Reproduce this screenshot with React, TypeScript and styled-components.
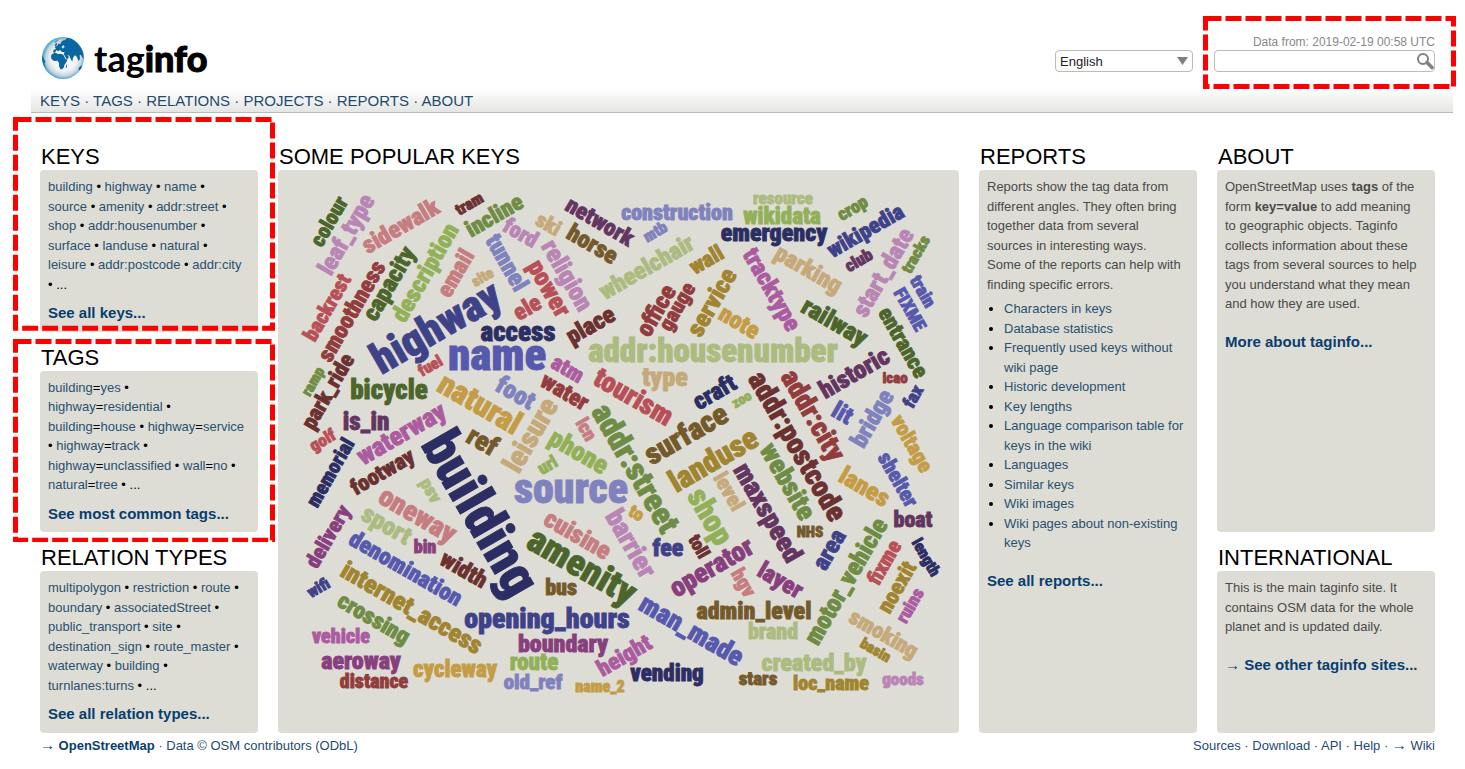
import React from 'react';
import styled, { createGlobalStyle } from 'styled-components';

const GlobalStyle = createGlobalStyle`
  * { box-sizing: border-box; }
  body {
    margin: 0;
    background: #fff;
    color: #000;
    font: 13px/1.5 "Liberation Sans", Arial, Helvetica, sans-serif;
  }
`;

const Page = styled.div`
  padding: 34px 12px 0 31px;
`;

const TopBar = styled.header`
  display: flex;
  justify-content: space-between;
  align-items: flex-start;
  padding: 0 18px 0 10px;
`;

const Logo = styled.a`
  display: flex;
  align-items: center;
  gap: 9px;
  height: 48px;
  color: #000;
  text-decoration: none;
  font: 700 36px/48px Lato, sans-serif;
`;

const Globe = styled.svg`
  width: 44px;
  height: 44px;
`;

const LogoStrong = styled.span`
  font-weight: 900;
  -webkit-text-stroke: 1px #000;
`;

const Controls = styled.div`
  display: flex;
  align-items: flex-end;
  gap: 21px;
`;

const SelectBox = styled.label`
  display: grid;
  align-items: center;
  width: 138px;
  height: 22px;
  border: 1px solid #bbb;
  border-radius: 4px;
  & > * { grid-area: 1 / 1; }
`;

const Select = styled.select`
  appearance: none;
  width: 100%;
  height: 20px;
  padding: 0 4px;
  border: 0;
  background: transparent;
  color: #222;
  font: 13px "Liberation Sans", Arial, sans-serif;
`;

const SelectArrow = styled.svg`
  justify-self: end;
  width: 11px;
  height: 8px;
  margin-right: 4px;
  pointer-events: none;
`;

const SearchBlock = styled.form`
  position: relative;
  width: 221px;
`;

const DataFrom = styled.div`
  color: #888;
  font-size: 12px;
  line-height: 16px;
  text-align: right;
`;

const SearchBox = styled.div`
  display: flex;
  height: 22px;
  border: 1px solid #bbb;
  border-radius: 4px;
  background: #fff;
`;

const SearchInput = styled.input`
  flex: 1;
  min-width: 0;
  padding: 0 4px;
  border: 0;
  outline: 0;
  background: transparent;
  font: inherit;
`;

const SearchButton = styled.button`
  display: flex;
  align-items: center;
  padding: 0;
  border: 0;
  background: transparent;
`;

const SearchIcon = styled.svg`
  display: block;
  width: 18px;
  height: 18px;
`;

const Nav = styled.nav`
  margin-top: 6px;
  padding: 1px 9px 0;
  border-bottom: 1px solid #bbb;
  background: linear-gradient(#fff, #e5e5e3);
  font-size: 15px;
  line-height: 23px;
  color: #1f4a70;
`;

const Columns = styled.main`
  display: grid;
  grid-template-columns: 218px minmax(0, 1fr) 218px 218px;
  gap: 13px 20px;
  padding: 31px 18px 0 9px;
`;

const Section = styled.section<{ $col: number; $row: number; $span?: number }>`
  position: relative;
  display: flex;
  flex-direction: column;
  grid-column: ${p => p.$col};
  grid-row: ${p => p.$row} / span ${p => p.$span ?? 1};
`;

const Heading = styled.h2`
  margin: 0;
  padding-left: 1px;
  font-size: 22px;
  line-height: 26px;
  font-weight: 400;
  text-transform: uppercase;
`;

const Panel = styled.div`
  flex: 1;
  padding: 7px 13px 7px 8px;
  border-radius: 4px;
  background: #ddddd5;
`;

const CloudPanel = styled(Panel)`
  display: flex;
  padding: 0;
`;

const Cloud = styled.svg`
  flex: 1;
  min-width: 0;
  height: auto;
`;

const CloudWord = styled.text`
  font-family: "Roboto Condensed", Impact, sans-serif;
  font-weight: 900;
  stroke-width: 0.8px;
  text-anchor: middle;
`;

const Link = styled.a`
  color: #29506f;
  text-decoration: none;
`;

const NavLink = styled(Link)`
  color: #1f4a70;
`;

const StrongLink = styled.a`
  color: #083e6f;
  font-weight: 700;
  text-decoration: none;
`;

const More = styled.p<{ $gap: number }>`
  margin: ${p => p.$gap}px 0 0;
  font-size: 15px;
  white-space: nowrap;
`;

const Arrow = styled.span`
  color: #083e6f;
  font-size: 15px;
  line-height: 1;
  font-weight: 400;
`;

const Text = styled.p`
  margin: 0;
  color: #4a4a48;
`;

const TagList = styled.div``;

const ReportList = styled.ul`
  margin: 5px 0 0;
  padding: 0 0 0 17px;
`;

const Footer = styled.footer`
  display: flex;
  justify-content: space-between;
  padding: 3px 18px 0 9px;
  color: #1f4a70;
`;

const Outline = styled.div<{ $inset: string }>`
  position: absolute;
  inset: ${p => p.$inset};
  z-index: 1;
  pointer-events: none;
`;

const OutlineSvg = styled.svg`
  display: block;
  width: 100%;
  height: 100%;
`;

const OutlineRect = styled.rect`
  width: calc(100% - 5px);
  height: calc(100% - 5px);
  fill: none;
  stroke: #f00;
  stroke-width: 5px;
  stroke-dasharray: 16 4;
`;

function Highlight({ inset }: { inset: string }) {
  return (
    <Outline $inset={inset} aria-hidden="true">
      <OutlineSvg>
        <OutlineRect x="2.5" y="2.5" />
      </OutlineSvg>
    </Outline>
  );
}

/* Four shades, dark to light, for each hue of the cloud */
const palette: Record<string, string> = {
  b0: '#2b2d63', b1: '#3f4288', b2: '#5759ae', b3: '#8082bd',
  g0: '#4b652a', g1: '#6f8c44', g2: '#92b058', g3: '#acbb80',
  y0: '#74592a', y1: '#a08430', y2: '#c49c45', y3: '#c5a97a',
  r0: '#6b3030', r1: '#923c3d', r2: '#b85058', r3: '#c67d81',
  p0: '#633560', p1: '#883f7d', p2: '#ab5b9f', p3: '#b985b5',
};

/* word, centre x, centre y, font size, angle, colour */
type Word = [string, number, number, number, number, string];

const words: Word[] = [
  ['colour', 330, 222, 21, -60, 'g0'],
  ['leaf_type', 347, 235, 24, -60, 'p3'],
  ['sidewalk', 401, 227, 24, -30, 'r3'],
  ['tram', 470, 205, 16, -30, 'r0'],
  ['incline', 495, 217, 23, -30, 'g1'],
  ['ford', 520, 234, 22, 30, 'p3'],
  ['ski', 548, 225, 21, 30, 'y3'],
  ['tunnel', 506, 263, 24, 60, 'b3'],
  ['email', 457, 274, 23, -60, 'r3'],
  ['description', 426, 273, 24, -60, 'g2'],
  ['capacity', 390, 284, 24, -60, 'g0'],
  ['smoothness', 353, 312, 23, -60, 'r1'],
  ['backrest', 328, 308, 21, -60, 'r2'],
  ['site', 483, 278, 15, -30, 'y3'],
  ['highway', 437, 329, 43, -30, 'b1'],
  ['ele', 528, 309, 23, -30, 'r2'],
  ['power', 548, 289, 25, 60, 'r2'],
  ['religion', 566, 276, 25, 60, 'p3'],
  ['network', 599, 223, 23, 30, 'p0'],
  ['horse', 592, 245, 24, 30, 'y0'],
  ['place', 591, 326, 24, -30, 'r0'],
  ['access', 518, 333, 27, 0, 'b0'],
  ['name', 497, 357, 45, 0, 'b2'],
  ['fuel', 431, 367, 16, -30, 'r2'],
  ['ramp', 314, 382, 15, -60, 'g1'],
  ['park_ride', 329, 392, 22, -60, 'r0'],
  ['bicycle', 389, 391, 27, 0, 'g0'],
  ['is_in', 366, 423, 25, 0, 'p0'],
  ['golf', 323, 441, 17, -30, 'r2'],
  ['memorial', 331, 473, 20, -60, 'b0'],
  ['waterway', 402, 435, 26, -30, 'p2'],
  ['footway', 383, 473, 22, -30, 'r0'],
  ['natural', 479, 405, 32, 30, 'y2'],
  ['foot', 515, 394, 25, 30, 'b3'],
  ['water', 564, 393, 23, 30, 'r1'],
  ['leisure', 532, 436, 29, -60, 'y3'],
  ['ref', 482, 442, 27, 30, 'y0'],
  ['phone', 578, 453, 26, 30, 'g2'],
  ['lcn', 585, 430, 19, 60, 'r3'],
  ['url', 548, 466, 18, -30, 'g2'],
  ['psv', 430, 491, 18, 60, 'g3'],
  ['building', 478, 515, 55, 60, 'b0'],
  ['source', 571, 491, 42, 0, 'b3'],
  ['oneway', 417, 516, 28, 30, 'r3'],
  ['sport', 386, 526, 25, 30, 'g3'],
  ['denomination', 405, 570, 23, 30, 'b2'],
  ['bin', 425, 548, 18, 0, 'p1'],
  ['delivery', 329, 537, 21, -60, 'p1'],
  ['internet_access', 411, 609, 25, 30, 'y1'],
  ['crossing', 373, 620, 23, 30, 'g1'],
  ['wifi', 319, 589, 16, -30, 'b1'],
  ['width', 463, 571, 23, 30, 'r0'],
  ['vehicle', 341, 637, 20, 0, 'p2'],
  ['aeroway', 361, 662, 24, 0, 'p1'],
  ['distance', 374, 682, 20, 0, 'r1'],
  ['cycleway', 455, 671, 23, 0, 'y2'],
  ['route', 534, 664, 23, 0, 'g2'],
  ['old_ref', 533, 683, 21, 0, 'b3'],
  ['boundary', 563, 645, 24, 0, 'p1'],
  ['bus', 561, 589, 22, 0, 'y0'],
  ['opening_hours', 547, 620, 28, 0, 'b1'],
  ['height', 625, 657, 23, -30, 'p2'],
  ['name_2', 600, 688, 16, 0, 'y2'],
  ['vending', 667, 675, 23, 0, 'b0'],
  ['stars', 758, 680, 19, 0, 'y0'],
  ['loc_name', 831, 684, 20, 0, 'y1'],
  ['goods', 903, 680, 17, 0, 'p3'],
  ['created_by', 814, 664, 24, 0, 'g3'],
  ['brand', 773, 633, 22, 0, 'g3'],
  ['admin_level', 754, 612, 24, 0, 'y0'],
  ['hgv', 743, 583, 20, 60, 'r3'],
  ['layer', 780, 581, 24, 30, 'p1'],
  ['operator', 712, 568, 27, -30, 'p1'],
  ['man_made', 691, 631, 27, 30, 'b2'],
  ['amenity', 581, 568, 37, 30, 'g0'],
  ['smoking', 883, 635, 22, 30, 'y3'],
  ['basin', 875, 651, 15, 30, 'y1'],
  ['ruins', 911, 606, 18, -60, 'p2'],
  ['noexit', 898, 588, 22, -60, 'y1'],
  ['fixme', 885, 563, 21, -60, 'r2'],
  ['motor_vehicle', 847, 582, 25, -60, 'g1'],
  ['length', 925, 558, 16, 60, 'b0'],
  ['mtb', 656, 233, 16, -30, 'b3'],
  ['construction', 677, 214, 22, 0, 'b3'],
  ['resource', 783, 199, 17, 0, 'g3'],
  ['wikidata', 782, 218, 23, 0, 'g2'],
  ['emergency', 774, 234, 24, 0, 'b0'],
  ['crop', 853, 209, 18, -30, 'g1'],
  ['wikipedia', 866, 232, 22, -30, 'b1'],
  ['club', 859, 261, 17, -30, 'p0'],
  ['start_date', 884, 273, 24, -60, 'p3'],
  ['tracks', 917, 255, 16, -60, 'g1'],
  ['train', 922, 292, 18, 60, 'b2'],
  ['FIXME', 909, 310, 18, 60, 'b2'],
  ['entrance', 902, 343, 22, 60, 'g0'],
  ['railway', 834, 323, 25, 30, 'g0'],
  ['parking', 808, 270, 24, 30, 'y3'],
  ['tracktype', 771, 290, 24, 60, 'p2'],
  ['wall', 707, 261, 22, -30, 'y1'],
  ['service', 713, 303, 25, -60, 'y1'],
  ['note', 739, 323, 24, 30, 'y2'],
  ['gauge', 678, 307, 21, -60, 'r1'],
  ['office', 657, 311, 24, -60, 'r1'],
  ['wheelchair', 647, 268, 24, -30, 'g3'],
  ['addr:housenumber', 713, 353, 33, 0, 'g3'],
  ['type', 665, 379, 26, 0, 'y3'],
  ['craft', 715, 393, 24, -30, 'b0'],
  ['historic', 855, 374, 25, -30, 'p0'],
  ['icao', 895, 379, 15, 0, 'r1'],
  ['fax', 914, 397, 18, -60, 'b1'],
  ['zoo', 742, 400, 14, -30, 'g2'],
  ['lit', 842, 414, 24, 30, 'b2'],
  ['bridge', 873, 419, 24, -60, 'b3'],
  ['voltage', 911, 444, 21, 60, 'y2'],
  ['shelter', 897, 480, 21, 60, 'b2'],
  ['boat', 913, 521, 22, 0, 'p0'],
  ['lanes', 864, 488, 25, 30, 'y2'],
  ['addr:city', 812, 416, 28, 60, 'r1'],
  ['addr:postcode', 796, 447, 29, 60, 'r0'],
  ['website', 787, 482, 27, 60, 'g1'],
  ['maxspeed', 767, 513, 27, 60, 'p0'],
  ['landuse', 714, 461, 31, -30, 'y1'],
  ['surface', 687, 436, 30, -30, 'y0'],
  ['level', 728, 492, 21, 60, 'y3'],
  ['shop', 709, 517, 31, 60, 'g2'],
  ['NHS', 810, 533, 15, 0, 'y0'],
  ['area', 830, 550, 24, -60, 'b1'],
  ['toll', 698, 547, 18, 60, 'r0'],
  ['fee', 668, 549, 24, 0, 'b1'],
  ['to', 636, 514, 18, 30, 'y2'],
  ['barrier', 630, 544, 27, 60, 'p3'],
  ['addr:street', 634, 469, 32, 60, 'g1'],
  ['tourism', 633, 398, 28, 30, 'r2'],
  ['atm', 567, 370, 22, 30, 'p2'],
  ['cuisine', 577, 536, 25, 30, 'r3'],
];

const navItems = ['KEYS', 'TAGS', 'RELATIONS', 'PROJECTS', 'REPORTS', 'ABOUT'];
const keys = ['building', 'highway', 'name', 'source', 'amenity', 'addr:street', 'shop', 'addr:housenumber', 'surface', 'landuse', 'natural', 'leisure', 'addr:postcode', 'addr:city'];
const tags = ['building=yes', 'highway=residential', 'building=house', 'highway=service', 'highway=track', 'highway=unclassified', 'wall=no', 'natural=tree'];
const relations = ['multipolygon', 'restriction', 'route', 'boundary', 'associatedStreet', 'public_transport', 'site', 'destination_sign', 'route_master', 'waterway', 'building', 'turnlanes:turns'];
const reports = ['Characters in keys', 'Database statistics', 'Frequently used keys without wiki page', 'Historic development', 'Key lengths', 'Language comparison table for keys in the wiki', 'Languages', 'Similar keys', 'Wiki images', 'Wiki pages about non-existing keys'];

function Bulleted({ items }: { items: string[] }) {
  return (
    <TagList>
      {items.map(item => {
        const [key, value] = item.split('=');
        return (
          <React.Fragment key={item}>
            <Link href="#">{key}</Link>
            {value && <>=<Link href="#">{value}</Link></>}
            {' • '}
          </React.Fragment>
        );
      })}
      ...
    </TagList>
  );
}

function Dotted({ items }: { items: React.ReactNode[] }) {
  return (
    <>
      {items.map((item, i) => (
        <React.Fragment key={i}>
          {i > 0 && ' · '}
          {item}
        </React.Fragment>
      ))}
    </>
  );
}

function WordCloud() {
  return (
    <Cloud viewBox="278 170 681 563" role="img" aria-label="Some popular keys">
      {words.map(([word, x, y, size, angle, colour]) => (
        <CloudWord
          key={word}
          transform={`translate(${x} ${y}) rotate(${angle})`}
          y={Math.round(size * 0.28)}
          fontSize={size}
          fill={palette[colour]}
          stroke={palette[colour]}
        >
          {word}
        </CloudWord>
      ))}
    </Cloud>
  );
}

function GlobeIcon() {
  return (
    <Globe viewBox="9 9 132 132" aria-hidden="true">
      <defs>
        <radialGradient id="sea" cx="0.52" cy="0.5" r="0.52">
          <stop offset="0" stopColor="#fff" />
          <stop offset="0.6" stopColor="#f2f3f5" />
          <stop offset="0.82" stopColor="#c3d3de" />
          <stop offset="1" stopColor="#2f9cc6" />
        </radialGradient>
      </defs>
      <circle cx="75" cy="75" r="63" fill="url(#sea)" />
      <g fill="#0a66a0">
        <path d="M45 58 47 50 54 48 50 42 58 38 62 31 66 34 72 24 82 20 88 14 102 18 118 30 130 46 136 62 137 78 132 72 129 66 125 66 126 78 121 84 117 72 111 67 105 74 103 86 98 78 94 68 88 66 93 72 87 80 81 70 77 63 80 58 71 57 66 50 62 55 55 52 51 59Z" />
        <path d="M42 63 52 59 60 63 68 62 76 65 82 77 88 81 83 91 79 96 78 103 72 109 67 109 63 99 63 89 58 83 48 84 40 77 39 69Z" />
        <path d="M85 96 88 94 86 104 83 104ZM50 36 55 30 58 34 53 41ZM14 66 18 80 22 84 19 93 24 106 17 96 12 78ZM122 104 132 96 130 106 123 113Z" />
        <path d="M52 24 62 18 57 27 49 31Z" opacity="0.5" />
      </g>
      <path d="M70 42 77 36 80 42 74 47Z" fill="#cfe0ea" />
    </Globe>
  );
}

export default function App() {
  return (
    <>
      <GlobalStyle />
      <Page>
        <TopBar>
          <Logo href="#">
            <GlobeIcon />
            <span>tag<LogoStrong>info</LogoStrong></span>
          </Logo>
          <Controls>
            <SelectBox>
              <Select aria-label="Language" defaultValue="en">
                <option value="en">English</option>
              </Select>
              <SelectArrow viewBox="0 0 11 8" aria-hidden="true">
                <path d="M0 0H11L5.500 8Z" fill="#808080" />
              </SelectArrow>
            </SelectBox>
            <SearchBlock onSubmit={e => e.preventDefault()}>
              <DataFrom>Data from: 2019-02-19 00:58 UTC</DataFrom>
              <SearchBox>
                <SearchInput type="text" aria-label="Search" />
                <SearchButton type="submit" aria-label="Search">
                  <SearchIcon viewBox="0 0 18 18">
                    <circle cx="7" cy="7" r="5" fill="none" stroke="#808080" strokeWidth="2" />
                    <path d="M11 10.500 16 15.500" stroke="#808080" strokeWidth="3.600" strokeLinecap="round" />
                  </SearchIcon>
                </SearchButton>
              </SearchBox>
              <Highlight inset="-18px -21px -17px -11px" />
            </SearchBlock>
          </Controls>
        </TopBar>
        <Nav>
          <Dotted items={navItems.map(item => <NavLink href="#">{item}</NavLink>)} />
        </Nav>
        <Columns>
          <Section $col={1} $row={1}>
            <Heading>Keys</Heading>
            <Panel>
              <Bulleted items={keys} />
              <More $gap={8}><StrongLink href="#">See all keys...</StrongLink></More>
            </Panel>
            <Highlight inset="-27px -17px 1px -27px" />
          </Section>
          <Section $col={1} $row={2}>
            <Heading>Tags</Heading>
            <Panel>
              <Bulleted items={tags} />
              <More $gap={8}><StrongLink href="#">See most common tags...</StrongLink></More>
            </Panel>
            <Highlight inset="-6px -17px -10px -27px" />
          </Section>
          <Section $col={1} $row={3}>
            <Heading>Relation types</Heading>
            <Panel>
              <Bulleted items={relations} />
              <More $gap={8}><StrongLink href="#">See all relation types...</StrongLink></More>
            </Panel>
          </Section>
          <Section $col={2} $row={1} $span={3}>
            <Heading>Some popular keys</Heading>
            <CloudPanel>
              <WordCloud />
            </CloudPanel>
          </Section>
          <Section $col={3} $row={1} $span={3}>
            <Heading>Reports</Heading>
            <Panel>
              <Text>
                Reports show the tag data from different angles. They often bring together data
                from several sources in interesting ways. Some of the reports can help with
                finding specific errors.
              </Text>
              <ReportList>
                {reports.map(report => (
                  <li key={report}><Link href="#">{report}</Link></li>
                ))}
              </ReportList>
              <More $gap={17}><StrongLink href="#">See all reports...</StrongLink></More>
            </Panel>
          </Section>
          <Section $col={4} $row={1} $span={2}>
            <Heading>About</Heading>
            <Panel>
              <Text>
                OpenStreetMap uses <b>tags</b> of the form <b>key=value</b> to add meaning to
                geographic objects. Taginfo collects information about these tags from several
                sources to help you understand what they mean and how they are used.
              </Text>
              <More $gap={17}><StrongLink href="#">More about taginfo...</StrongLink></More>
            </Panel>
          </Section>
          <Section $col={4} $row={3}>
            <Heading>International</Heading>
            <Panel>
              <Text>
                This is the main taginfo site. It contains OSM data for the whole planet and is
                updated daily.
              </Text>
              <More $gap={17}>
                <StrongLink href="#"><Arrow>→</Arrow> See other taginfo sites...</StrongLink>
              </More>
            </Panel>
          </Section>
        </Columns>
        <Footer>
          <div>
            <Dotted items={[
              <StrongLink href="#"><Arrow>→</Arrow> OpenStreetMap</StrongLink>,
              <NavLink href="#">Data © OSM contributors (ODbL)</NavLink>,
            ]} />
          </div>
          <div>
            <Dotted items={[
              ...['Sources', 'Download', 'API', 'Help'].map(item => <NavLink href="#">{item}</NavLink>),
              <NavLink href="#"><Arrow>→</Arrow> Wiki</NavLink>,
            ]} />
          </div>
        </Footer>
      </Page>
    </>
  );
}
